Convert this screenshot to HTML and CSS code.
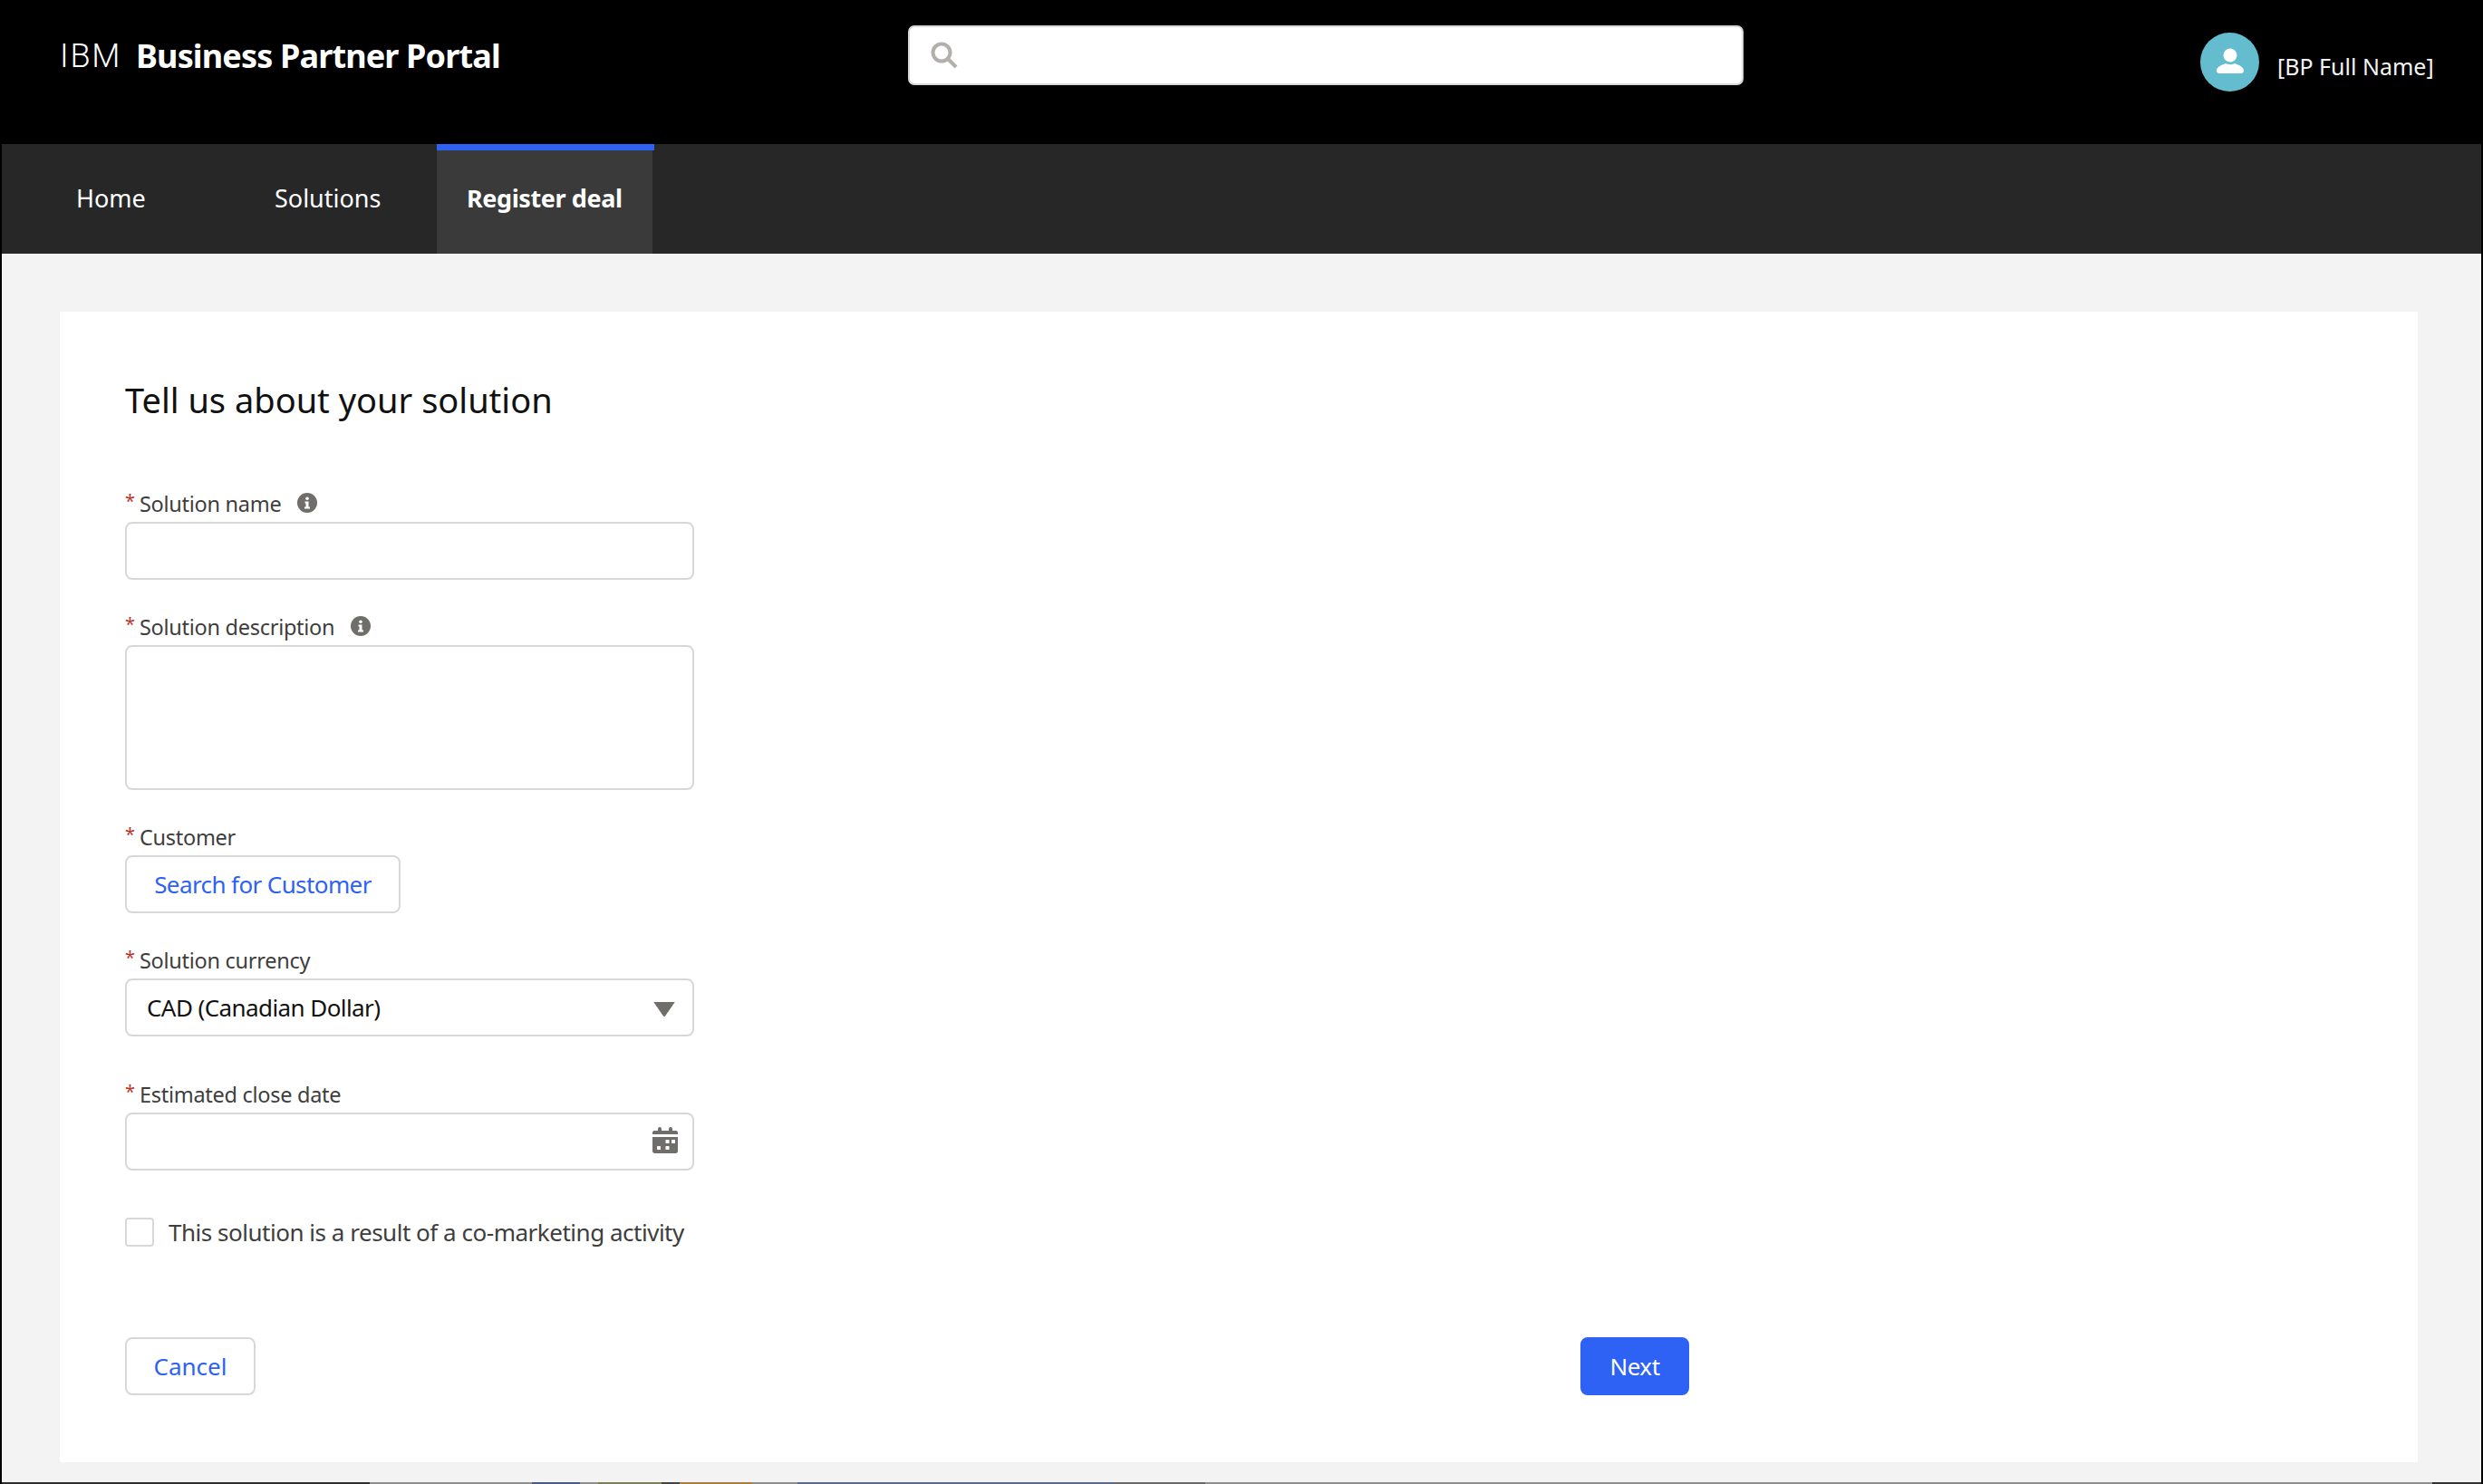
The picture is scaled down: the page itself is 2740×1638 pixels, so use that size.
FILE: index.html
```html
<!DOCTYPE html>
<html lang="en">
<head>
<meta charset="utf-8">
<title>IBM Business Partner Portal</title>
<link rel="stylesheet" href="styles.css">
</head>
<body>
<div class="app">
  <header class="masthead">
    <div class="brand"><span class="brand-ibm">IBM</span><span class="brand-name">Business Partner Portal</span></div>
    <div class="search">
      <svg class="search-icon" viewBox="0 0 30 30" aria-hidden="true"><circle cx="12" cy="12" r="9.5" fill="none" stroke="#b2afac" stroke-width="4"/><path d="M18.5 18.500 28 28" stroke="#b2afac" stroke-width="4" fill="none"/></svg>
    </div>
    <div class="user">
      <span class="avatar"><svg viewBox="0 0 30 30" aria-hidden="true"><circle cx="15" cy="8" r="7.500" fill="#fff"/><path d="M0 25c0-4 5-6 10-8 2 1.500 8 1.500 10 0 5 2 10 4 10 8 0 2-1.500 3-3 3H3c-1.500 0-3-1-3-3z" fill="#fff"/></svg></span>
      <span class="user-name">[BP Full Name]</span>
    </div>
  </header>
  <nav class="tabs">
    <a class="tab tab-home">Home</a>
    <a class="tab tab-solutions">Solutions</a>
    <a class="tab tab-active">Register deal</a>
  </nav>
  <main class="page">
    <section class="card">
      <h1 class="title">Tell us about your solution</h1>
      <div class="field">
        <div class="label"><span class="req">*</span>Solution name<svg class="info" viewBox="0 0 22 22" aria-hidden="true"><circle cx="11" cy="11" r="11" fill="#706e6b"/><circle cx="11" cy="6.200" r="1.800" fill="#fff"/><path d="M8.500 9.500h4v6h1.500v2H8v-2h1.500v-4h-1z" fill="#fff"/></svg></div>
        <div class="box"></div>
      </div>
      <div class="field">
        <div class="label"><span class="req">*</span>Solution description<svg class="info" viewBox="0 0 22 22" aria-hidden="true"><circle cx="11" cy="11" r="11" fill="#706e6b"/><circle cx="11" cy="6.200" r="1.800" fill="#fff"/><path d="M8.500 9.500h4v6h1.500v2H8v-2h1.500v-4h-1z" fill="#fff"/></svg></div>
        <div class="box box-area"></div>
      </div>
      <div class="field">
        <div class="label"><span class="req">*</span>Customer</div>
        <button class="btn btn-customer">Search for Customer</button>
      </div>
      <div class="field field-currency">
        <div class="label"><span class="req">*</span>Solution currency</div>
        <div class="box box-select"><span>CAD (Canadian Dollar)</span><svg class="caret" viewBox="0 0 22 15" aria-hidden="true"><path d="M0 0h22L12 14.500c-.5.700-1.500.700-2 0z" fill="#706e6b"/></svg></div>
      </div>
      <div class="field field-date">
        <div class="label"><span class="req">*</span>Estimated close date</div>
        <div class="box box-date"><svg class="cal" viewBox="0 0 28 29" aria-hidden="true"><path d="M0 8V6c0-1 .8-2 2-2h4V2a2 2 0 0 1 4 0v2h8V2a2 2 0 0 1 4 0v2h4c1.200 0 2 1 2 2v2z" fill="#706e6b"/><path d="M0 11h28v15.500c0 1.400-1 2.500-2.500 2.500h-23C1 29 0 27.900 0 26.500z" fill="#706e6b"/><g fill="#fff"><rect x="14.500" y="14" width="4" height="4" rx=".5"/><rect x="21" y="14" width="4" height="4" rx=".5"/><rect x="5" y="21" width="4" height="4" rx=".5"/><rect x="14.500" y="21" width="4" height="4" rx=".5"/></g></svg></div>
      </div>
      <label class="check"><span class="check-box"></span><span>This solution is a result of a co-marketing activity</span></label>
      <div class="actions">
        <button class="btn btn-cancel">Cancel</button>
        <button class="btn btn-next">Next</button>
      </div>
    </section>
  </main>
  <div class="strip" aria-hidden="true"></div>
</div>
</body>
</html>
```
FILE: styles.css
```css
* { box-sizing: border-box; }
html, body { margin: 0; padding: 0; background: #000; }
body { font-family: "Noto Sans", "Open Sans", sans-serif; color: #161616; }
.app { width: 2740px; height: 1638px; display: flex; flex-direction: column; overflow: hidden; border-right: 2px solid #000; border-left: 2px solid #000; }
.masthead { height: 159px; margin: 0 -2px; background: #000; color: #fff; display: flex; align-items: flex-start; flex: none; }
.brand { width: 1002px; padding: 40px 0 0 66px; line-height: 44px; font-size: 36px; white-space: nowrap; display: flex; }
.brand-ibm { font-weight: 300; width: 85px; font-family: Roboto, sans-serif; letter-spacing: 1.8px; }
.brand-name { font-weight: 700; font-family: "Noto Sans", sans-serif; letter-spacing: -.85px; font-size: 36px; margin-left: -1px; }
.search { width: 922px; height: 66px; margin-top: 28px; background: #fff; border: 2px solid #d8d8d8; border-radius: 7px; display: flex; align-items: center; padding-left: 23px; }
.search-icon { width: 30px; height: 30px; }
.user { margin-left: 504px; padding-top: 36px; display: flex; align-items: center; }
.avatar { width: 65px; height: 65px; border-radius: 50%; background: #64bccf; display: flex; align-items: center; justify-content: center; }
.avatar svg { width: 30px; height: 30px; margin-top: -2px; }
.user-name { margin-left: 20px; padding-top: 8px; font-size: 25px; color: #f4f4f4; white-space: nowrap; }
.tabs { height: 121px; flex: none; background: #272727; display: flex; padding-left: 82px; color: #fff; font-size: 27px; }
.tab { display: flex; align-items: center; line-height: 34px; padding-bottom: 1px; height: 121px; white-space: nowrap; }
.tab-home { width: 219px; }
.tab-solutions { width: 179px; }
.tab-active { position: relative; width: 238px; padding-left: 33px; background: #3a3a3a; font-weight: 700; letter-spacing: -.4px; }
.tab-active::before { content: ""; position: absolute; left: 0; top: 0; width: 240px; height: 7px; background: #2d62f5; }
.page { flex: 1; min-height: 0; background: #f3f3f3; padding: 64px 70px 22px 64px; }
.card { height: 1270px; background: #fff; padding: 73px 0 0 72px; }
.title { margin: 0 0 77px; font-weight: 400; font-size: 38px; line-height: 48px; color: #111; }
.field { margin-bottom: 38px; }
.field-currency { margin-bottom: 50px; }
.field-date { margin-bottom: 52px; }
.label { height: 30px; line-height: 30px; margin-bottom: 4px; padding-bottom: 2px; font-size: 23.500px; letter-spacing: -.28px; color: #3e3e3c; display: flex; align-items: center; white-space: nowrap; }
.req { color: #b8352b; width: 16px; font-size: 20px; margin-top: -6px; }
.info { width: 22px; height: 22px; margin-left: 18px; margin-top: -3px; }
.box { width: 628px; height: 64px; background: #fff; border: 2px solid #d8d8d8; border-radius: 8px; }
.box-area { height: 160px; }
.box-select { display: flex; align-items: center; justify-content: space-between; padding: 0 19px 0 22px; font-size: 26px; letter-spacing: -.58px; color: #111; }
.caret { width: 24px; height: 16px; margin-top: 4px; }
.box-date { display: flex; align-items: center; justify-content: flex-end; padding-right: 16px; }
.cal { width: 28px; height: 29px; margin-top: -4px; }
.btn { display: block; height: 64px; font: inherit; font-size: 26px; border-radius: 8px; background: #fff; color: #2d62f5; border: 2px solid #d8d8d8; padding: 0; white-space: nowrap; }
.btn-customer { width: 304px; letter-spacing: -.6px; }
.check { display: flex; align-items: center; height: 32px; font-size: 26px; letter-spacing: -.48px; color: #3e3e3c; white-space: nowrap; }
.check-box { width: 32px; height: 32px; border: 2px solid #d8d8d8; border-radius: 4px; margin-right: 16px; }
.actions { display: flex; justify-content: space-between; width: 1726px; margin-top: 100px; }
.btn-cancel { width: 144px; }
.btn-next { width: 120px; background: #2d62f5; border-color: #2d62f5; color: #fff; letter-spacing: -.5px; }
.strip { height: 2px; flex: none; margin: 0 -2px; background: linear-gradient(to right, #2e2e2e 408px, #8f8f8f 408px, #8f8f8f 587px, #4a5a86 587px, #4a5a86 640px, #8f8f8f 640px, #8f8f8f 660px, #7d8158 660px, #7d8158 730px, #444 730px, #444 750px, #a87f3e 750px, #a87f3e 830px, #8f8f8f 830px, #8f8f8f 880px, #5c6a90 880px, #5c6a90 1230px, #6a6a6a 1230px, #6a6a6a 1330px, #8f8f8f 1330px, #8f8f8f 2684px, #333 2684px); }
```
